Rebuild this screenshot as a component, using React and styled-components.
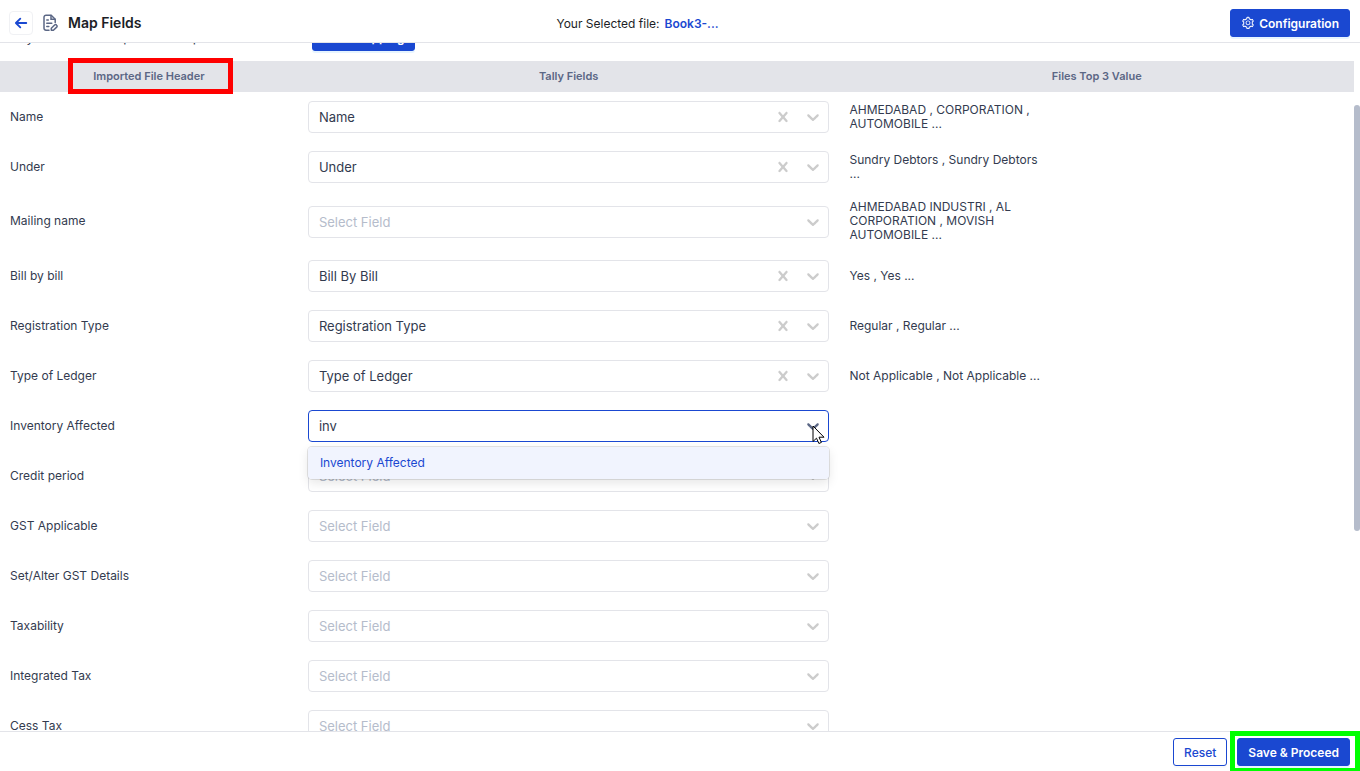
import React, { useLayoutEffect, useRef, useState } from 'react';
import styled, { createGlobalStyle } from 'styled-components';
import { AiOutlineSetting } from 'react-icons/ai';

const ROWS = [
    { header: 'Name', field: 'Name', values: 'AHMEDABAD , CORPORATION , AUTOMOBILE ...' },
    { header: 'Under', field: 'Under', values: 'Sundry Debtors , Sundry Debtors ...' },
    { header: 'Mailing name', values: 'AHMEDABAD INDUSTRI , AL CORPORATION , MOVISH AUTOMOBILE ...' },
    { header: 'Bill by bill', field: 'Bill By Bill', values: 'Yes , Yes ...' },
    { header: 'Registration Type', field: 'Registration Type', values: 'Regular , Regular ...' },
    { header: 'Type of Ledger', field: 'Type of Ledger', values: 'Not Applicable , Not Applicable ...' },
    { header: 'Inventory Affected', search: 'inv', option: 'Inventory Affected' },
    { header: 'Credit period' },
    { header: 'GST Applicable' },
    { header: 'Set/Alter GST Details' },
    { header: 'Taxability' },
    { header: 'Integrated Tax' },
    { header: 'Cess Tax' }
];

const INITIAL_SCROLL = 28;

const ChevronIcon = () => (
    <svg width="20" height="20" viewBox="0 0 20 20" fill="currentColor" aria-hidden="true">
        <path d="M4.516 7.548c0.436-0.446 1.043-0.481 1.576 0l3.908 3.747 3.908-3.747c0.533-0.481 1.141-0.446 1.574 0 0.436 0.445 0.408 1.197 0 1.615-0.406 0.418-4.695 4.502-4.695 4.502-0.217 0.223-0.502 0.335-0.787 0.335s-0.57-0.112-0.789-0.335c0 0-4.287-4.084-4.695-4.502s-0.436-1.17 0-1.615z" />
    </svg>
);

const CrossIcon = () => (
    <svg width="20" height="20" viewBox="0 0 20 20" fill="currentColor" aria-hidden="true">
        <path d="M14.348 14.849c-0.469 0.469-1.229 0.469-1.697 0l-2.651-3.030-2.651 3.029c-0.469 0.469-1.229 0.469-1.697 0-0.469-0.469-0.469-1.229 0-1.697l2.758-3.15-2.759-3.152c-0.469-0.469-0.469-1.228 0-1.697s1.228-0.469 1.697 0l2.652 3.031 2.651-3.031c0.469-0.469 1.228-0.469 1.697 0s0.469 1.229 0 1.697l-2.758 3.152 2.758 3.15c0.469 0.469 0.469 1.229 0 1.698z" />
    </svg>
);

const BackIcon = () => (
    <svg width="14" height="14" viewBox="0 0 14 14" fill="none" stroke="#1a48d1" strokeWidth="1.8" aria-hidden="true">
        <path d="M12.3 7H2M6.3 2.600L1.900 7l4.400 4.400" strokeLinecap="round" strokeLinejoin="round" />
    </svg>
);

const FileEditIcon = () => (
    <svg width="15" height="18" viewBox="0 0 15 18" fill="none" stroke="#5b6785" strokeWidth="1.5" aria-hidden="true">
        <path d="M6 16.200H3A2 2 0 0 1 1 14.200V3.200A2 2 0 0 1 3 1.200h5.200l4 4V8.500" strokeLinejoin="round" strokeLinecap="round" />
        <path d="M8 1.500v3.800h4M3.800 6h1.500M3.800 9.200h5M3.800 12.500h2" strokeLinecap="round" />
        <path d="M8.300 14.200l3.300-3.200a1.300 1.300 0 0 1 1.900 0l.2.200a1.300 1.300 0 0 1 0 1.900l-3.300 3.200H8.300z" strokeLinejoin="round" />
    </svg>
);

const CursorIcon = () => (
    <svg width="13" height="20" viewBox="0 0 13 20" aria-hidden="true">
        <path
            d="M1 1v15.500l3.500-3.300 2.400 5.300 2.500-1.100-2.400-5.200H12z"
            fill="#fff"
            stroke="#000"
            strokeWidth="1"
        />
    </svg>
);

const SearchField = ({ label, initial, option }) => {
    const [search, setSearch] = useState(initial);

    return (
        <FieldWrap>
            <FieldBox $focused>
                <FieldInput
                    aria-label={label}
                    value={search}
                    onChange={event => setSearch(event.target.value)}
                />
                <Indicator $focused>
                    <ChevronIcon />
                </Indicator>
            </FieldBox>
            <Menu>
                <MenuOption onClick={() => setSearch(option)}>{option}</MenuOption>
            </Menu>
            <Cursor>
                <CursorIcon />
            </Cursor>
        </FieldWrap>
    );
};

const SelectField = ({ label, initial = '' }) => {
    const [value, setValue] = useState(initial);

    return (
        <FieldBox>
            <FieldSelect
                aria-label={label}
                value={value}
                $empty={!value}
                onChange={event => setValue(event.target.value)}
            >
                <option value="">Select Field</option>
                {initial && <option value={initial}>{initial}</option>}
            </FieldSelect>
            {value && (
                <ClearButton type="button" aria-label="Clear" onClick={() => setValue('')}>
                    <CrossIcon />
                </ClearButton>
            )}
            <Indicator>
                <ChevronIcon />
            </Indicator>
        </FieldBox>
    );
};

export default () => {
    const scroller = useRef(null);

    useLayoutEffect(() => {
        scroller.current.scrollTop = INITIAL_SCROLL;
    }, []);

    return (
        <Page>
            <GlobalStyle />
            <Header>
                <HeaderLeft>
                    <BackButton type="button" aria-label="Back">
                        <BackIcon />
                    </BackButton>
                    <FileEditIcon />
                    <Title>Map Fields</Title>
                </HeaderLeft>
                <SelectedFile>
                    Your Selected file:
                    <FileName>Book3-...</FileName>
                </SelectedFile>
                <HeaderRight>
                    <Button type="button" $primary>
                        <AiOutlineSetting size={14} />
                        Configuration
                    </Button>
                </HeaderRight>
            </Header>
            <Body>
                <Scroller ref={scroller}>
                    <Intro>
                        <IntroText>Any columns to import as template</IntroText>
                        <Button type="button" $primary>
                            Auto Mapping
                        </Button>
                    </Intro>
                    <Table>
                        <thead>
                            <tr>
                                <HeadCell $width="22%">
                                    <Highlight>Imported File Header</Highlight>
                                </HeadCell>
                                <HeadCell $width="40%">Tally Fields</HeadCell>
                                <HeadCell $width="38%">Files Top 3 Value</HeadCell>
                            </tr>
                        </thead>
                        <tbody>
                            {ROWS.map(row => (
                                <tr key={row.header}>
                                    <LabelCell>{row.header}</LabelCell>
                                    <Cell>
                                        {row.search ? (
                                            <SearchField
                                                label={row.header}
                                                initial={row.search}
                                                option={row.option}
                                            />
                                        ) : (
                                            <SelectField label={row.header} initial={row.field} />
                                        )}
                                    </Cell>
                                    <Cell>
                                        <Values>{row.values}</Values>
                                    </Cell>
                                </tr>
                            ))}
                        </tbody>
                    </Table>
                </Scroller>
                <ScrollTrack>
                    <ScrollThumb />
                </ScrollTrack>
            </Body>
            <Footer>
                <Button type="button">Reset</Button>
                <ProceedFrame>
                    <Button type="button" $primary>
                        Save &amp; Proceed
                    </Button>
                </ProceedFrame>
            </Footer>
        </Page>
    );
};

const GlobalStyle = createGlobalStyle`
    * {
        box-sizing: border-box;
    }

    body {
        margin: 0;
        background: #fff;
        color: #333b4f;
        font-family: Inter, 'Liberation Sans', sans-serif;
        font-size: 12px;
    }

    button,
    input,
    select {
        font: inherit;
    }
`;

const Page = styled.div`
    display: flex;
    flex-direction: column;
    height: 100vh;
`;

const Header = styled.header`
    display: grid;
    grid-template-columns: 1fr auto 1fr;
    align-items: center;
    height: 43px;
    padding: 6px 10px 2px 9px;
    border-bottom: 1px solid #e3e4e9;
`;

const HeaderLeft = styled.div`
    display: flex;
    align-items: center;
    gap: 10px;
`;

const HeaderRight = styled.div`
    display: flex;
    justify-content: flex-end;
`;

const BackButton = styled.button`
    display: flex;
    align-items: center;
    justify-content: center;
    width: 24px;
    height: 24px;
    padding: 0;
    background: #fff;
    border: 1px solid #f0f1f4;
    border-radius: 4px;
`;

const Title = styled.h1`
    margin: 0;
    color: #1c1e26;
    font-size: 14px;
    font-weight: 600;
    line-height: 16px;
`;

const SelectedFile = styled.div`
    display: flex;
    gap: 5px;
    color: #1c1e26;
`;

const FileName = styled.span`
    width: 138px;
    color: #1a48d1;
    font-weight: 600;
`;

const Button = styled.button`
    display: flex;
    align-items: center;
    gap: 4px;
    height: 28px;
    padding: 0 10px;
    background: ${({ $primary }) => ($primary ? '#1a48d1' : '#fff')};
    color: ${({ $primary }) => ($primary ? '#fff' : '#1a48d1')};
    border: 1px solid #1a48d1;
    border-radius: 3px;
    box-shadow: 0 2px 0 ${({ $primary }) => ($primary ? '#e6f4ff' : '#fafafa')};
    font-weight: ${({ $primary }) => ($primary ? 600 : 500)};
    white-space: nowrap;
`;

const Body = styled.main`
    display: flex;
    flex: 1;
    min-height: 0;
`;

const Scroller = styled.div`
    flex: 1;
    overflow-y: auto;
    scrollbar-width: none;
`;

const ScrollTrack = styled.div`
    width: 6px;
    padding-top: 62px;
`;

const ScrollThumb = styled.div`
    height: 68%;
    background: #b5bccb;
    border-radius: 3px;
`;

const Intro = styled.div`
    display: grid;
    grid-template-columns: 302px auto;
    justify-content: start;
    align-items: center;
    height: 46px;
    padding: 8px 10px 10px;
`;

const IntroText = styled.span`
    font-size: 13px;
`;

const Table = styled.table`
    width: 100%;
    table-layout: fixed;
    border-collapse: collapse;
`;

const HeadCell = styled.th`
    width: ${({ $width }) => $width};
    height: 31px;
    padding: 0 0 2px;
    background: #e3e4e9;
    color: #5b6785;
    font-size: 11px;
    font-weight: 600;
`;

const Highlight = styled.span`
    margin-right: -3px;
    padding: 6px 23px 6px 20px;
    outline: 5px solid #f00;
`;

const Cell = styled.td`
    height: 50px;
    padding: 8px 10px;
`;

const LabelCell = styled(Cell)`
    padding-bottom: 10px;
`;

const Values = styled.div`
    max-width: 200px;
    padding-bottom: 1px;
    line-height: 14px;
`;

const FieldWrap = styled.div`
    position: relative;
`;

const FieldBox = styled.div`
    display: flex;
    align-items: center;
    height: 32px;
    background: #fff;
    border: 1px solid ${({ $focused }) => ($focused ? '#1a48d1' : '#e3e4e9')};
    border-radius: 4px;
    font-size: 13px;
`;

const FieldInput = styled.input`
    flex: 1;
    min-width: 0;
    padding: 0 10px;
    background: none;
    border: 0;
    outline: 0;
    color: #333b4f;
`;

const FieldSelect = styled.select`
    flex: 1;
    min-width: 0;
    padding: 0 10px;
    appearance: none;
    background: none;
    border: 0;
    outline: 0;
    color: ${({ $empty }) => ($empty ? '#b5bccb' : '#333b4f')};
`;

const Indicator = styled.span`
    display: flex;
    padding: 5px;
    color: ${({ $focused }) => ($focused ? '#5b6785' : '#ccc')};
`;

const ClearButton = styled.button`
    display: flex;
    padding: 5px;
    background: none;
    border: 0;
    color: #ccc;
`;

const Menu = styled.div`
    position: absolute;
    z-index: 1;
    top: 37px;
    left: 0;
    right: 0;
    border-radius: 4px;
    box-shadow: 0 0 0 1px rgba(0, 0, 0, 0.1), 0 4px 11px rgba(0, 0, 0, 0.1);
`;

const MenuOption = styled.div`
    padding: 0 12px;
    background: #f1f4fe;
    border-radius: 4px;
    color: #1a48d1;
    line-height: 32px;
`;

const Cursor = styled.div`
    position: absolute;
    z-index: 2;
    top: 15px;
    right: 4px;
    pointer-events: none;
`;

const Footer = styled.footer`
    display: flex;
    align-items: center;
    justify-content: flex-end;
    gap: 10px;
    height: 40px;
    padding: 1px 10px 0;
    border-top: 1px solid #e3e4e9;
`;

const ProceedFrame = styled.div`
    padding: 2px 5px 2px 2px;
    margin: -2px -5px -2px -2px;
    outline: 5px solid #0f0;
`;
